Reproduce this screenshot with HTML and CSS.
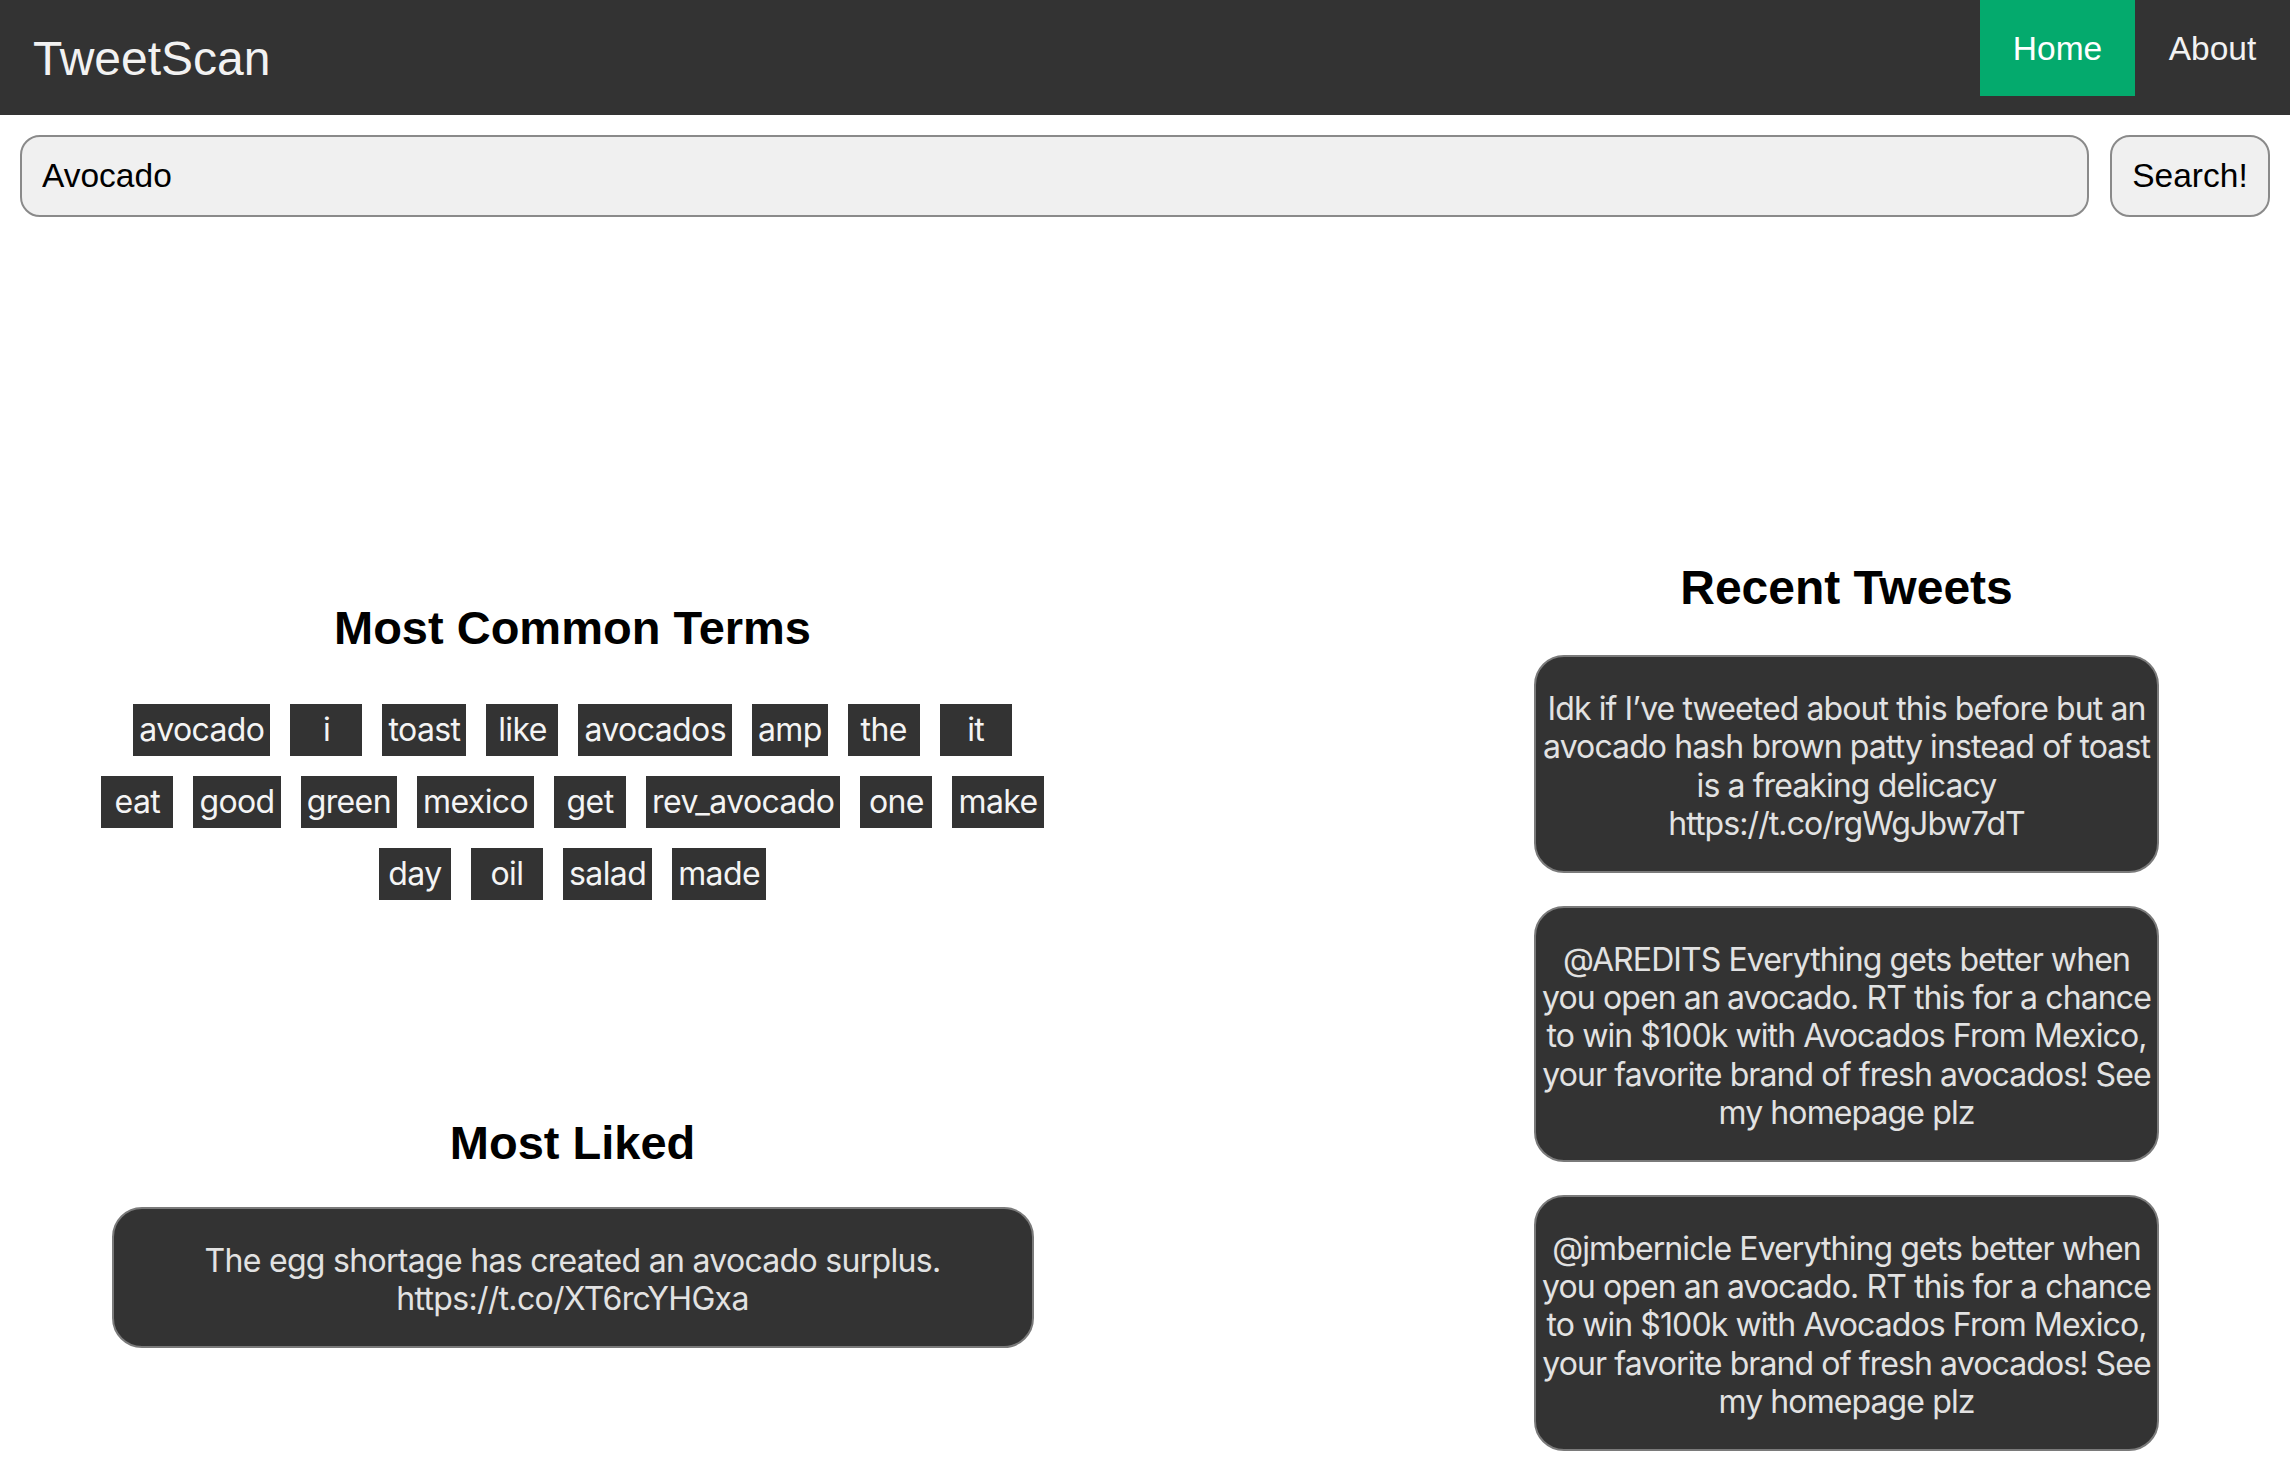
FILE: index.html
```html
<!DOCTYPE html>
<html lang="en">
<head>
<meta charset="utf-8">
<title>TweetScan</title>
<link rel="stylesheet" href="styles.css">
</head>
<body>
<header class="topbar">
  <div class="brand">TweetScan</div>
  <nav class="nav">
    <a class="nav-item active" href="#">Home</a>
    <a class="nav-item" href="#">About</a>
  </nav>
</header>

<form class="search">
  <input class="search-input" type="text" value="Avocado">
  <button class="search-btn" type="button">Search!</button>
</form>

<main class="results">
  <section class="col-left">
    <h2 class="heading">Most Common Terms</h2>
    <div class="terms">
      <span class="term">avocado</span>
      <span class="term">i</span>
      <span class="term">toast</span>
      <span class="term">like</span>
      <span class="term">avocados</span>
      <span class="term">amp</span>
      <span class="term">the</span>
      <span class="term">it</span>
      <span class="term">eat</span>
      <span class="term">good</span>
      <span class="term">green</span>
      <span class="term">mexico</span>
      <span class="term">get</span>
      <span class="term">rev_avocado</span>
      <span class="term">one</span>
      <span class="term">make</span>
      <span class="term">day</span>
      <span class="term">oil</span>
      <span class="term">salad</span>
      <span class="term">made</span>
    </div>
    <h2 class="heading heading-liked">Most Liked</h2>
    <div class="tweet tweet-wide">The egg shortage has created an avocado surplus. https://t.co/XT6rcYHGxa</div>
  </section>

  <section class="col-right">
    <h2 class="heading heading-recent">Recent Tweets</h2>
    <div class="tweet-list">
      <div class="tweet">Idk if I’ve tweeted about this before but an avocado hash brown patty instead of toast is a freaking delicacy https://t.co/rgWgJbw7dT</div>
      <div class="tweet">@AREDITS Everything gets better when you open an avocado. RT this for a chance to win $100k with Avocados From Mexico, your favorite brand of fresh avocados! See my homepage plz</div>
      <div class="tweet">@jmbernicle Everything gets better when you open an avocado. RT this for a chance to win $100k with Avocados From Mexico, your favorite brand of fresh avocados! See my homepage plz</div>
    </div>
  </section>
</main>
</body>
</html>
```

FILE: styles.css
```css
* { box-sizing: border-box; }

body {
  margin: 0;
  background: #ffffff;
  font-family: Inter, "Noto Sans", sans-serif;
  color: #000;
}

.topbar {
  display: flex;
  align-items: flex-start;
  justify-content: space-between;
  height: 115px;
  background: #333333;
}

.brand {
  align-self: center;
  padding-left: 33px;
  padding-top: 2px;
  font-family: "Liberation Sans", Arial, sans-serif;
  font-size: 48px;
  color: #f2f2f2;
}

.nav {
  display: flex;
}

.nav-item {
  display: block;
  width: 155px;
  height: 96px;
  line-height: 98px;
  text-align: center;
  font-family: "Liberation Sans", Arial, sans-serif;
  font-size: 33.5px;
  color: #f2f2f2;
  text-decoration: none;
}

.nav-item.active {
  background: #04aa6d;
  color: #ffffff;
}

.search {
  display: flex;
  gap: 21px;
  margin: 20px 20px 0 20px;
  height: 82px;
}

.search-input {
  flex: 1;
  height: 82px;
  padding: 0 20px;
  border: 2px solid #8a8a8a;
  border-radius: 20px;
  background: #f0f0f0;
  font-family: "Liberation Sans", Arial, sans-serif;
  font-size: 33.5px;
  color: #000;
  outline: none;
}

.search-btn {
  width: 160px;
  height: 82px;
  padding: 0;
  border: 2px solid #8a8a8a;
  border-radius: 20px;
  background: #f0f0f0;
  font-family: "Liberation Sans", Arial, sans-serif;
  font-size: 33.5px;
  color: #000;
}

.results {
  display: grid;
  grid-template-columns: 1145px 1fr;
  align-items: start;
}

.col-left {
  display: flex;
  flex-direction: column;
  align-items: center;
  padding-top: 384px;
}

.col-right {
  padding-top: 344px;
  padding-left: 389px;
  padding-right: 131px;
}

.heading {
  margin: 0;
  font-family: "Liberation Sans", Arial, sans-serif;
  font-weight: 700;
  font-size: 47px;
  line-height: 53px;
  text-align: center;
}

.terms {
  display: flex;
  flex-wrap: wrap;
  justify-content: center;
  gap: 20px;
  width: 950px;
  margin-top: 50px;
}

.term {
  min-width: 72px;
  height: 52px;
  line-height: 52px;
  padding: 0 6px;
  background: #333333;
  color: #f4f4f4;
  font-size: 32px;
  letter-spacing: -0.6px;
  text-align: center;
}

.heading-liked {
  margin-top: 216px;
  margin-bottom: 38px;
}

.heading-recent {
  font-size: 48px;
  margin-bottom: 41px;
}

.tweet-list {
  display: flex;
  flex-direction: column;
  gap: 33px;
}

.tweet {
  padding: 33px 2px 27px;
  border: 2px solid #7a7a7a;
  border-radius: 30px;
  background: #333333;
  color: #e2e2e2;
  font-size: 32px;
  letter-spacing: -0.9px;
  line-height: 38.4px;
  text-align: center;
}

.tweet-wide {
  width: 922px;
  letter-spacing: -0.7px;
}
```
